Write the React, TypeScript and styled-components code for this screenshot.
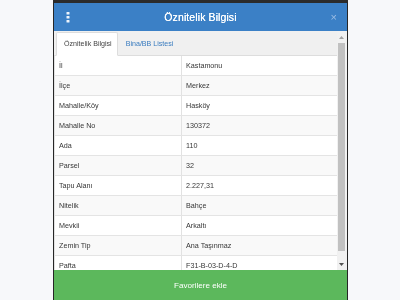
import React from "react";
import styled, { createGlobalStyle } from "styled-components";

const GlobalStyle = createGlobalStyle`
  html, body {
    margin: 0;
    padding: 0;
    background: #f7f8fa;
    font-family: "Liberation Sans", Arial, sans-serif;
    -webkit-font-smoothing: antialiased;
  }
`;

const Page = styled.div`
  width: 400px;
  height: 300px;
  display: flex;
  justify-content: center;
  overflow: hidden;
`;

const Modal = styled.div`
  width: 295px;
  height: 300px;
  box-sizing: border-box;
  border-top: 3px solid #2b2b2b;
  border-left: 1px solid #262626;
  border-right: 1px solid #262626;
  display: flex;
  flex-direction: column;
  background: #ffffff;
  will-change: transform;
`;

const Header = styled.div`
  height: 28px;
  flex: none;
  background: #3b80c6;
  display: grid;
  grid-template-columns: 1fr auto 1fr;
  align-items: center;
`;

const MenuButton = styled.div`
  padding-left: 12px;
  display: flex;
  align-items: center;
`;

const Title = styled.div`
  color: #ffffff;
  font-size: 10.5px;
  letter-spacing: 0.1px;
  text-shadow: 0 0 0.4px #ffffff;
`;

const Close = styled.div`
  justify-self: end;
  padding-right: 10px;
  color: #9dbde3;
  font-size: 11px;
  line-height: 1;
`;

const Body = styled.div`
  flex: 1;
  display: flex;
  overflow: hidden;
`;

const Content = styled.div`
  flex: 1;
  overflow: hidden;
  display: flex;
  flex-direction: column;
`;

const TabBar = styled.div`
  height: 25px;
  flex: none;
  box-sizing: border-box;
  background: #f0f0f0;
  border-bottom: 1px solid #dddddd;
  padding: 1px 0 0 2px;
  display: flex;
  align-items: stretch;
`;

const Tab = styled.div<{ $active?: boolean }>`
  padding: 0 5px 0 7px;
  margin-bottom: -1px;
  display: flex;
  align-items: center;
  font-size: 7.1px;
  color: ${(p) => (p.$active ? "#444444" : "#3a7cbf")};
  background: ${(p) => (p.$active ? "#ffffff" : "transparent")};
  border: 1px solid ${(p) => (p.$active ? "#dddddd" : "transparent")};
  border-bottom-color: ${(p) => (p.$active ? "#ffffff" : "transparent")};
  border-radius: 2px 2px 0 0;
`;

const Row = styled.div<{ $striped: boolean }>`
  height: 20px;
  flex: none;
  box-sizing: border-box;
  display: grid;
  grid-template-columns: 127px 1fr;
  background: ${(p) => (p.$striped ? "#f9f9f9" : "#ffffff")};
  border-left: 1px solid #e2e2e2;
  border-bottom: 1px solid #e4e4e4;
`;

const Cell = styled.div<{ $divider?: boolean }>`
  display: flex;
  align-items: center;
  padding-left: 4px;
  font-size: 7.2px;
  color: #363636;
  border-right: ${(p) => (p.$divider ? "1px solid #e2e2e2" : "none")};
`;

const Scrollbar = styled.div`
  width: 10px;
  flex: none;
  background: #f1f1f1;
  display: flex;
  flex-direction: column;
  align-items: center;
  padding: 2px 1px 2px 0;
  box-sizing: border-box;
`;

const Arrow = styled.div`
  height: 8px;
  flex: none;
  display: flex;
  align-items: center;
  justify-content: center;
`;

const Thumb = styled.div`
  width: 7px;
  margin: 2px 0 9px;
  flex: 1;
  background: #c1c1c1;
`;

const Footer = styled.div`
  height: 30px;
  flex: none;
  background: #5cb85c;
  color: #ffffff;
  font-size: 8.1px;
  display: flex;
  align-items: center;
  justify-content: center;
`;

const rows: [string, string][] = [
  ["İl", "Kastamonu"],
  ["İlçe", "Merkez"],
  ["Mahalle/Köy", "Hasköy"],
  ["Mahalle No", "130372"],
  ["Ada", "110"],
  ["Parsel", "32"],
  ["Tapu Alanı", "2.227,31"],
  ["Nitelik", "Bahçe"],
  ["Mevkii", "Arkaltı"],
  ["Zemin Tip", "Ana Taşınmaz"],
  ["Pafta", "F31-B-03-D-4-D"],
];

const Kebab = () => (
  <svg width="4" height="11" viewBox="0 0 4 11">
    <rect x="0.5" y="0" width="3" height="2.6" rx="0.6" fill="#eef4fb" />
    <rect x="0.5" y="4" width="3" height="2.6" rx="0.6" fill="#eef4fb" />
    <rect x="0.5" y="8" width="3" height="2.6" rx="0.6" fill="#eef4fb" />
  </svg>
);

const App = () => {
  return (
    <>
      <GlobalStyle />
      <Page>
        <Modal>
          <Header>
            <MenuButton>
              <Kebab />
            </MenuButton>
            <Title>Öznitelik Bilgisi</Title>
            <Close>×</Close>
          </Header>
          <Body>
            <Content>
              <TabBar>
                <Tab $active>Öznitelik Bilgisi</Tab>
                <Tab>Bina/BB Listesi</Tab>
              </TabBar>
              {rows.map(([label, value], i) => (
                <Row key={label} $striped={i % 2 === 1}>
                  <Cell $divider>{label}</Cell>
                  <Cell>{value}</Cell>
                </Row>
              ))}
            </Content>
            <Scrollbar>
              <Arrow>
                <svg width="5" height="3" viewBox="0 0 5 3">
                  <path d="M2.5 0 L5 3 L0 3 Z" fill="#a3a3a3" />
                </svg>
              </Arrow>
              <Thumb />
              <Arrow>
                <svg width="5" height="3" viewBox="0 0 5 3">
                  <path d="M0 0 L5 0 L2.5 3 Z" fill="#505050" />
                </svg>
              </Arrow>
            </Scrollbar>
          </Body>
          <Footer>Favorilere ekle</Footer>
        </Modal>
      </Page>
    </>
  );
};

export default App;
